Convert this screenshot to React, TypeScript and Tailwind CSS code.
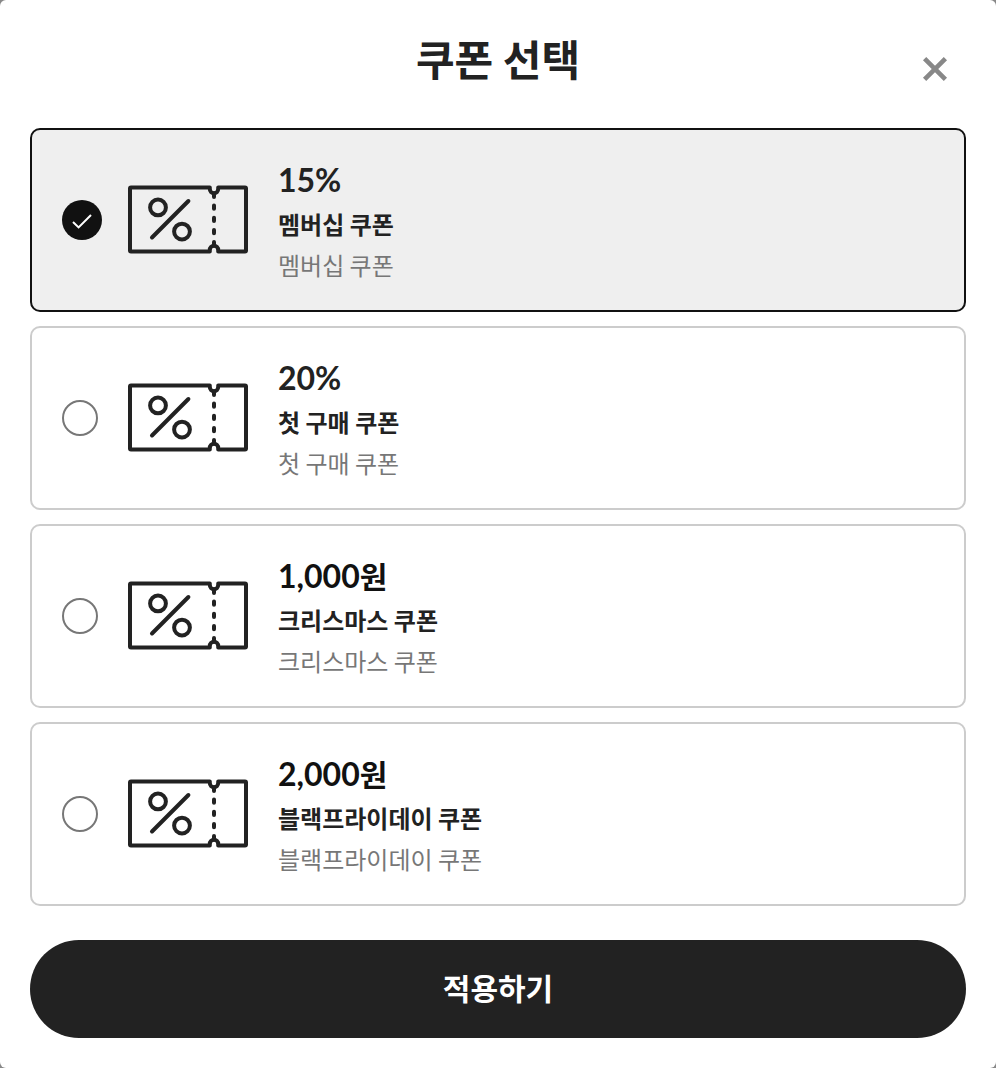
import { useState } from "react";

const coupons = [
  { id: "membership", value: "15%", unit: "", name: "멤버십 쿠폰", description: "멤버십 쿠폰" },
  { id: "first", value: "20%", unit: "", name: "첫 구매 쿠폰", description: "첫 구매 쿠폰" },
  { id: "christmas", value: "1,000", unit: "원", name: "크리스마스 쿠폰", description: "크리스마스 쿠폰" },
  { id: "blackfriday", value: "2,000", unit: "원", name: "블랙프라이데이 쿠폰", description: "블랙프라이데이 쿠폰" },
];

function TicketIcon() {
  return (
    <svg
      aria-hidden
      width="120"
      height="72"
      viewBox="0 0 120 72"
      fill="none"
      stroke="#222"
      strokeWidth="4"
      strokeLinecap="round"
      strokeLinejoin="round"
      className="shrink-0"
    >
      <path d="M3 3.5H81.8V5A4.2 4.2 0 0 0 90.2 5V3.5H117Q118 3.5 118 4.5V66.5Q118 67.5 117 67.5H90.2V66A4.2 4.2 0 0 0 81.8 66V67.5H3Q2 67.5 2 66.5V4.5Q2 3.5 3 3.5Z" />
      <circle cx="30" cy="23.4" r="7.9" />
      <circle cx="54" cy="47.6" r="7.9" />
      <path d="M24 53.5L60.4 17" />
      {/* tear line */}
      <path d="M86 9.5V13M86 21.6V24.8M86 33.8V37M86 46V49.2M86 58V61.5" />
    </svg>
  );
}

function CheckIcon() {
  return (
    <svg
      aria-hidden
      width="40"
      height="40"
      viewBox="0 0 40 40"
      fill="none"
      stroke="white"
      strokeWidth="2"
      className="pointer-events-none col-start-1 row-start-1"
    >
      <path d="M11 22L16.6 27.4L29 15" />
    </svg>
  );
}

export default function App() {
  const [selected, setSelected] = useState("membership");

  return (
    <div className="min-h-screen bg-[#888] font-['Noto_Sans_CJK_KR',sans-serif] text-[#222]">
      <main className="min-h-screen rounded-md bg-white p-[30px]">
        <header className="grid grid-cols-[1fr_auto_1fr] items-center pb-[42px]">
          <h1 className="col-start-2 text-[42px] leading-[56px] font-bold">쿠폰 선택</h1>
          <button
            type="button"
            aria-label="닫기"
            className="mt-[22px] mr-[18px] cursor-pointer justify-self-end"
          >
            <svg width="26" height="26" viewBox="0 0 26 26" stroke="#888" strokeWidth="4.6">
              <path d="M2.6 2.6L23.4 23.4M23.4 2.6L2.6 23.4" />
            </svg>
          </button>
        </header>

        <form onSubmit={(e) => e.preventDefault()}>
          <div role="radiogroup" aria-label="쿠폰 선택" className="flex flex-col gap-[14px]">
            {coupons.map((c) => {
              const checked = selected === c.id;
              return (
                <label
                  key={c.id}
                  className={`flex cursor-pointer items-center rounded-[10px] border-2 px-[30px] py-[26px] ${
                    checked ? "border-[#111] bg-[#efefef]" : "border-[#ccc] bg-white"
                  }`}
                >
                  <span className="grid w-[66px] shrink-0 items-center">
                    <input
                      type="radio"
                      name="coupon"
                      value={c.id}
                      checked={checked}
                      onChange={() => setSelected(c.id)}
                      className="col-start-1 row-start-1 size-9 cursor-pointer appearance-none rounded-full border-2 border-[#777] checked:size-10 checked:border-0 checked:bg-[#111]"
                    />
                    {checked && <CheckIcon />}
                  </span>
                  <TicketIcon />
                  <span className="ml-[30px] flex flex-col pt-1 pb-[2px]">
                    <strong
                      className={`font-['Lato','Noto_Sans_CJK_KR',sans-serif] text-[32px] leading-[40px] font-bold ${
                        c.unit ? "text-[#111]" : ""
                      }`}
                    >
                      {c.value}
                      {c.unit && <span className="text-[30px]">{c.unit}</span>}
                    </strong>
                    <span className="text-[24px] leading-[48px] font-bold">{c.name}</span>
                    <span className="text-[24px] leading-[34px] text-[#777]">{c.description}</span>
                  </span>
                </label>
              );
            })}
          </div>

          <button
            type="submit"
            className="mt-[34px] h-[98px] w-full cursor-pointer rounded-full bg-[#222] pb-1 text-[30px] font-bold text-white"
          >
            적용하기
          </button>
        </form>
      </main>
    </div>
  );
}
